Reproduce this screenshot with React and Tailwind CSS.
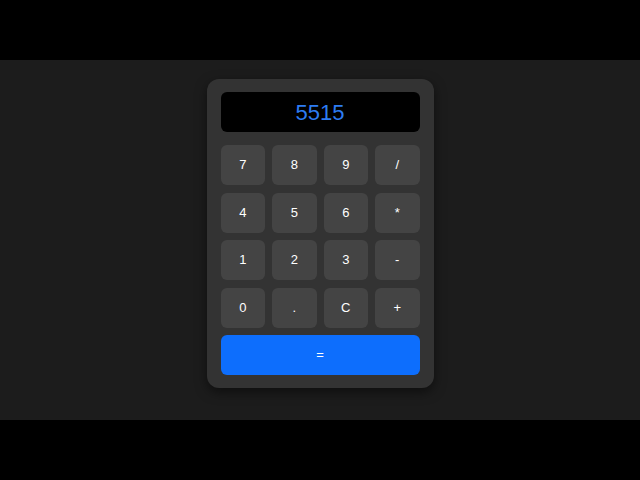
import React, { useState } from 'react';

const keys = ['7', '8', '9', '/', '4', '5', '6', '*', '1', '2', '3', '-', '0', '.', 'C', '+'];

export default function App() {
  const [value, setValue] = useState('5515');

  const press = (k) => {
    if (k === 'C') return setValue('');
    setValue((v) => v + k);
  };

  const calc = () => {
    try {
      // eslint-disable-next-line no-new-func
      setValue(String(Function(`return (${value})`)()));
    } catch (e) {
      setValue('Error');
    }
  };

  return (
    <div className="w-[640px] h-[480px] bg-black flex flex-col" style={{ fontFamily: '"Liberation Sans", Arial, sans-serif' }}>
      <div className="h-[60px]" />
      <div className="h-[360px] bg-[#1c1c1c] flex justify-center pt-[19px]">
        <div className="w-[227px] h-[309px] bg-[#333333] rounded-[12px] px-[14px] py-[13px] flex flex-col gap-[13px] shadow-[0_4px_12px_rgba(0,0,0,0.5)]">
          <div className="h-[40px] bg-black rounded-[6px] flex items-center justify-center text-[22px] text-[#2d7cf2]">
            {value}
          </div>
          <div className="grid grid-cols-4 gap-x-[7px] gap-y-[7.5px]">
            {keys.map((k) => (
              <button
                key={k}
                onClick={() => press(k)}
                className="h-[40px] bg-[#444444] rounded-[6px] text-white text-[13px]"
              >
                {k}
              </button>
            ))}
            <button
              onClick={calc}
              className="col-span-4 h-[40px] bg-[#0d6efd] rounded-[6px] text-white text-[13px]"
            >
              =
            </button>
          </div>
        </div>
      </div>
      <div className="flex-1" />
    </div>
  );
}
